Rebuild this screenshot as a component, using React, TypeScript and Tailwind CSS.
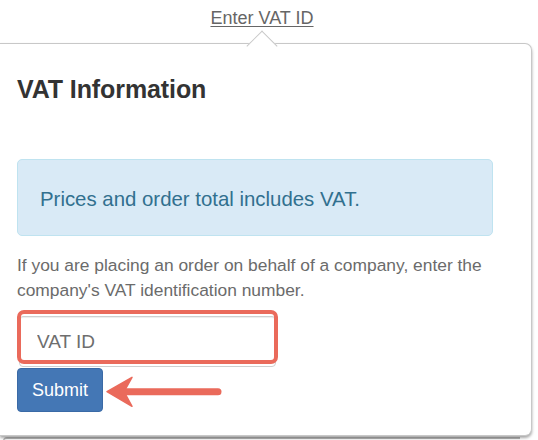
import React from "react";

export default function App() {
  return (
    <div
      className="relative w-[538px] h-[440px] overflow-hidden bg-white"
      style={{ fontFamily: '"Liberation Sans", Arial, Helvetica, sans-serif' }}
    >
      {/* trigger link */}
      <div className="h-[43px] pt-[8px] flex justify-center pr-[14px]">
        <span className="text-[18px] leading-[20px] text-[#666] underline underline-offset-[2px] decoration-[1px]">
          Enter VAT ID
        </span>
      </div>

      {/* popover */}
      <div className="relative w-[532px] h-[393px] bg-white border border-l-0 border-[#c8c8c8] rounded-r-[7px] shadow-[0_2px_3px_rgba(0,0,0,0.35)] pl-[17px]">
        {/* arrow */}
        <div className="absolute left-[251px] top-[-9px] w-[22px] h-[22px] rotate-45 bg-white border-l border-t border-[#c8c8c8]" />

        <h3 className="pt-[31px] text-[25px] leading-[28px] font-bold text-[#333] tracking-[-0.1px]">
          VAT Information
        </h3>

        <div className="mt-[56px] w-[476px] h-[77px] rounded-[5px] bg-[#d9eaf6] border border-[#bfe3f0] pl-[22px] pt-[27px]">
          <p className="text-[20.4px] leading-[24px] text-[#31708f]">
            Prices and order total includes VAT.
          </p>
        </div>

        <p className="mt-[17px] w-[480px] text-[17.4px] leading-[25px] text-[#6b6b6b]">
          If you are placing an order on behalf of a company, enter the company's VAT identification number.
        </p>

        <div className="relative mt-[13px] ml-[2px] w-[257px] h-[51px]">
          <input
            readOnly
            placeholder="VAT ID"
            className="w-full h-full rounded-[4px] border border-[#cfcfcf] bg-white pl-[17px] text-[19px] text-[#666] placeholder:text-[#6e6e6e] outline-none shadow-[inset_0_1px_1px_rgba(0,0,0,0.075)]"
            style={{ fontFamily: '"Liberation Sans", Arial, Helvetica, sans-serif' }}
          />
          <div className="pointer-events-none absolute left-[-2px] top-[-6px] w-[261px] h-[54px] rounded-[7px] border-[4px] border-[#ea6a5b]" />
        </div>

        <div className="mt-[1px] flex items-center">
          <button className="w-[86px] h-[44px] rounded-[4px] bg-[#4477b5] border border-[#3a6aa6] text-white text-[18px] leading-[20px]">
            Submit
          </button>
          <svg width="118" height="32" viewBox="0 0 118 32" className="ml-[2px] mt-[3px]">
            <path d="M2 15.7 L27 1.3 L19 15.7 L27 30.3 Z" fill="#ea6a5b" stroke="#ea6a5b" strokeWidth="1.5" strokeLinejoin="round" />
            <line x1="18" y1="15.7" x2="113" y2="15.7" stroke="#ea6a5b" strokeWidth="7" strokeLinecap="round" />
          </svg>
        </div>
      </div>

      {/* box underneath */}
      <div className="ml-[3px] mt-[1px] w-[517px] h-[10px] border-t-[2px] border-l border-[#b5b5b5] rounded-tl-[4px] bg-[#f7f7f7]" />
    </div>
  );
}
